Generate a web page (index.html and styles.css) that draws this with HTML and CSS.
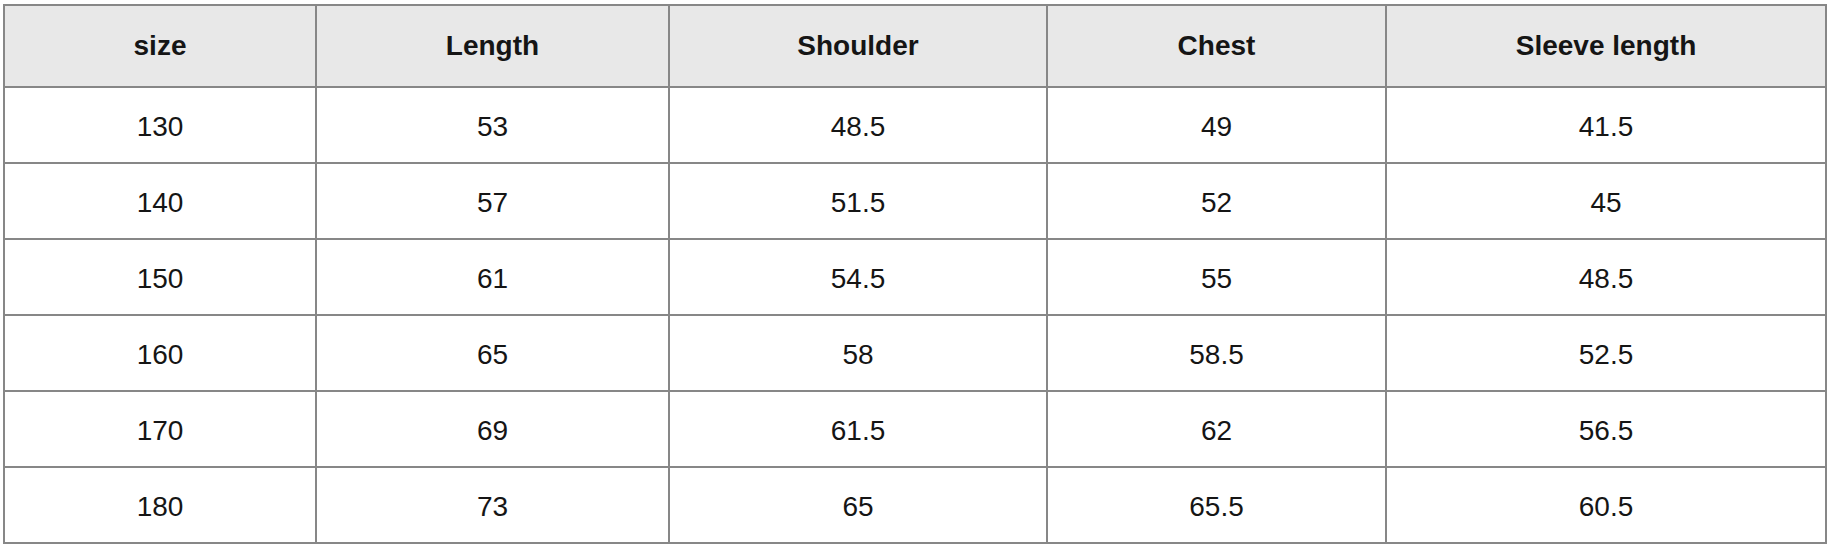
FILE: index.html
```html
<!DOCTYPE html>
<html lang="en">
<head>
<meta charset="utf-8">
<title>Size chart</title>
<link rel="stylesheet" href="styles.css">
</head>
<body>
<table class="size-table">
  <thead>
    <tr class="head-row">
      <th class="c1">size</th>
      <th class="c2">Length</th>
      <th class="c3">Shoulder</th>
      <th class="c4">Chest</th>
      <th class="c5">Sleeve length</th>
    </tr>
  </thead>
  <tbody>
    <tr><td>130</td><td>53</td><td>48.5</td><td>49</td><td>41.5</td></tr>
    <tr><td>140</td><td>57</td><td>51.5</td><td>52</td><td>45</td></tr>
    <tr><td>150</td><td>61</td><td>54.5</td><td>55</td><td>48.5</td></tr>
    <tr><td>160</td><td>65</td><td>58</td><td>58.5</td><td>52.5</td></tr>
    <tr><td>170</td><td>69</td><td>61.5</td><td>62</td><td>56.5</td></tr>
    <tr><td>180</td><td>73</td><td>65</td><td>65.5</td><td>60.5</td></tr>
  </tbody>
</table>
</body>
</html>
```
FILE: styles.css
```css
html, body {
  margin: 0;
  padding: 0;
  background: #ffffff;
}

.size-table {
  margin: 4px 0 0 3px;
  width: 1824px;
  table-layout: fixed;
  border-collapse: separate;
  border-spacing: 0;
  border-left: 2px solid #878787;
  border-top: 2px solid #878787;
  font-family: "Liberation Sans", Arial, sans-serif;
  font-size: 28px;
  color: #151515;
}

.size-table th,
.size-table td {
  box-sizing: border-box;
  padding: 0;
  text-align: center;
  vertical-align: middle;
  border-right: 2px solid #878787;
  border-bottom: 2px solid #878787;
}

.size-table th {
  background: #e8e8e8;
  font-weight: 700;
}

.size-table td {
  font-weight: 400;
  padding-top: 4px;
}

.head-row {
  height: 82px;
}

.size-table tbody tr {
  height: 76px;
}

.c1 { width: 312px; }
.c2 { width: 353px; }
.c3 { width: 378px; }
.c4 { width: 339px; }
.c5 { width: 440px; }
```
